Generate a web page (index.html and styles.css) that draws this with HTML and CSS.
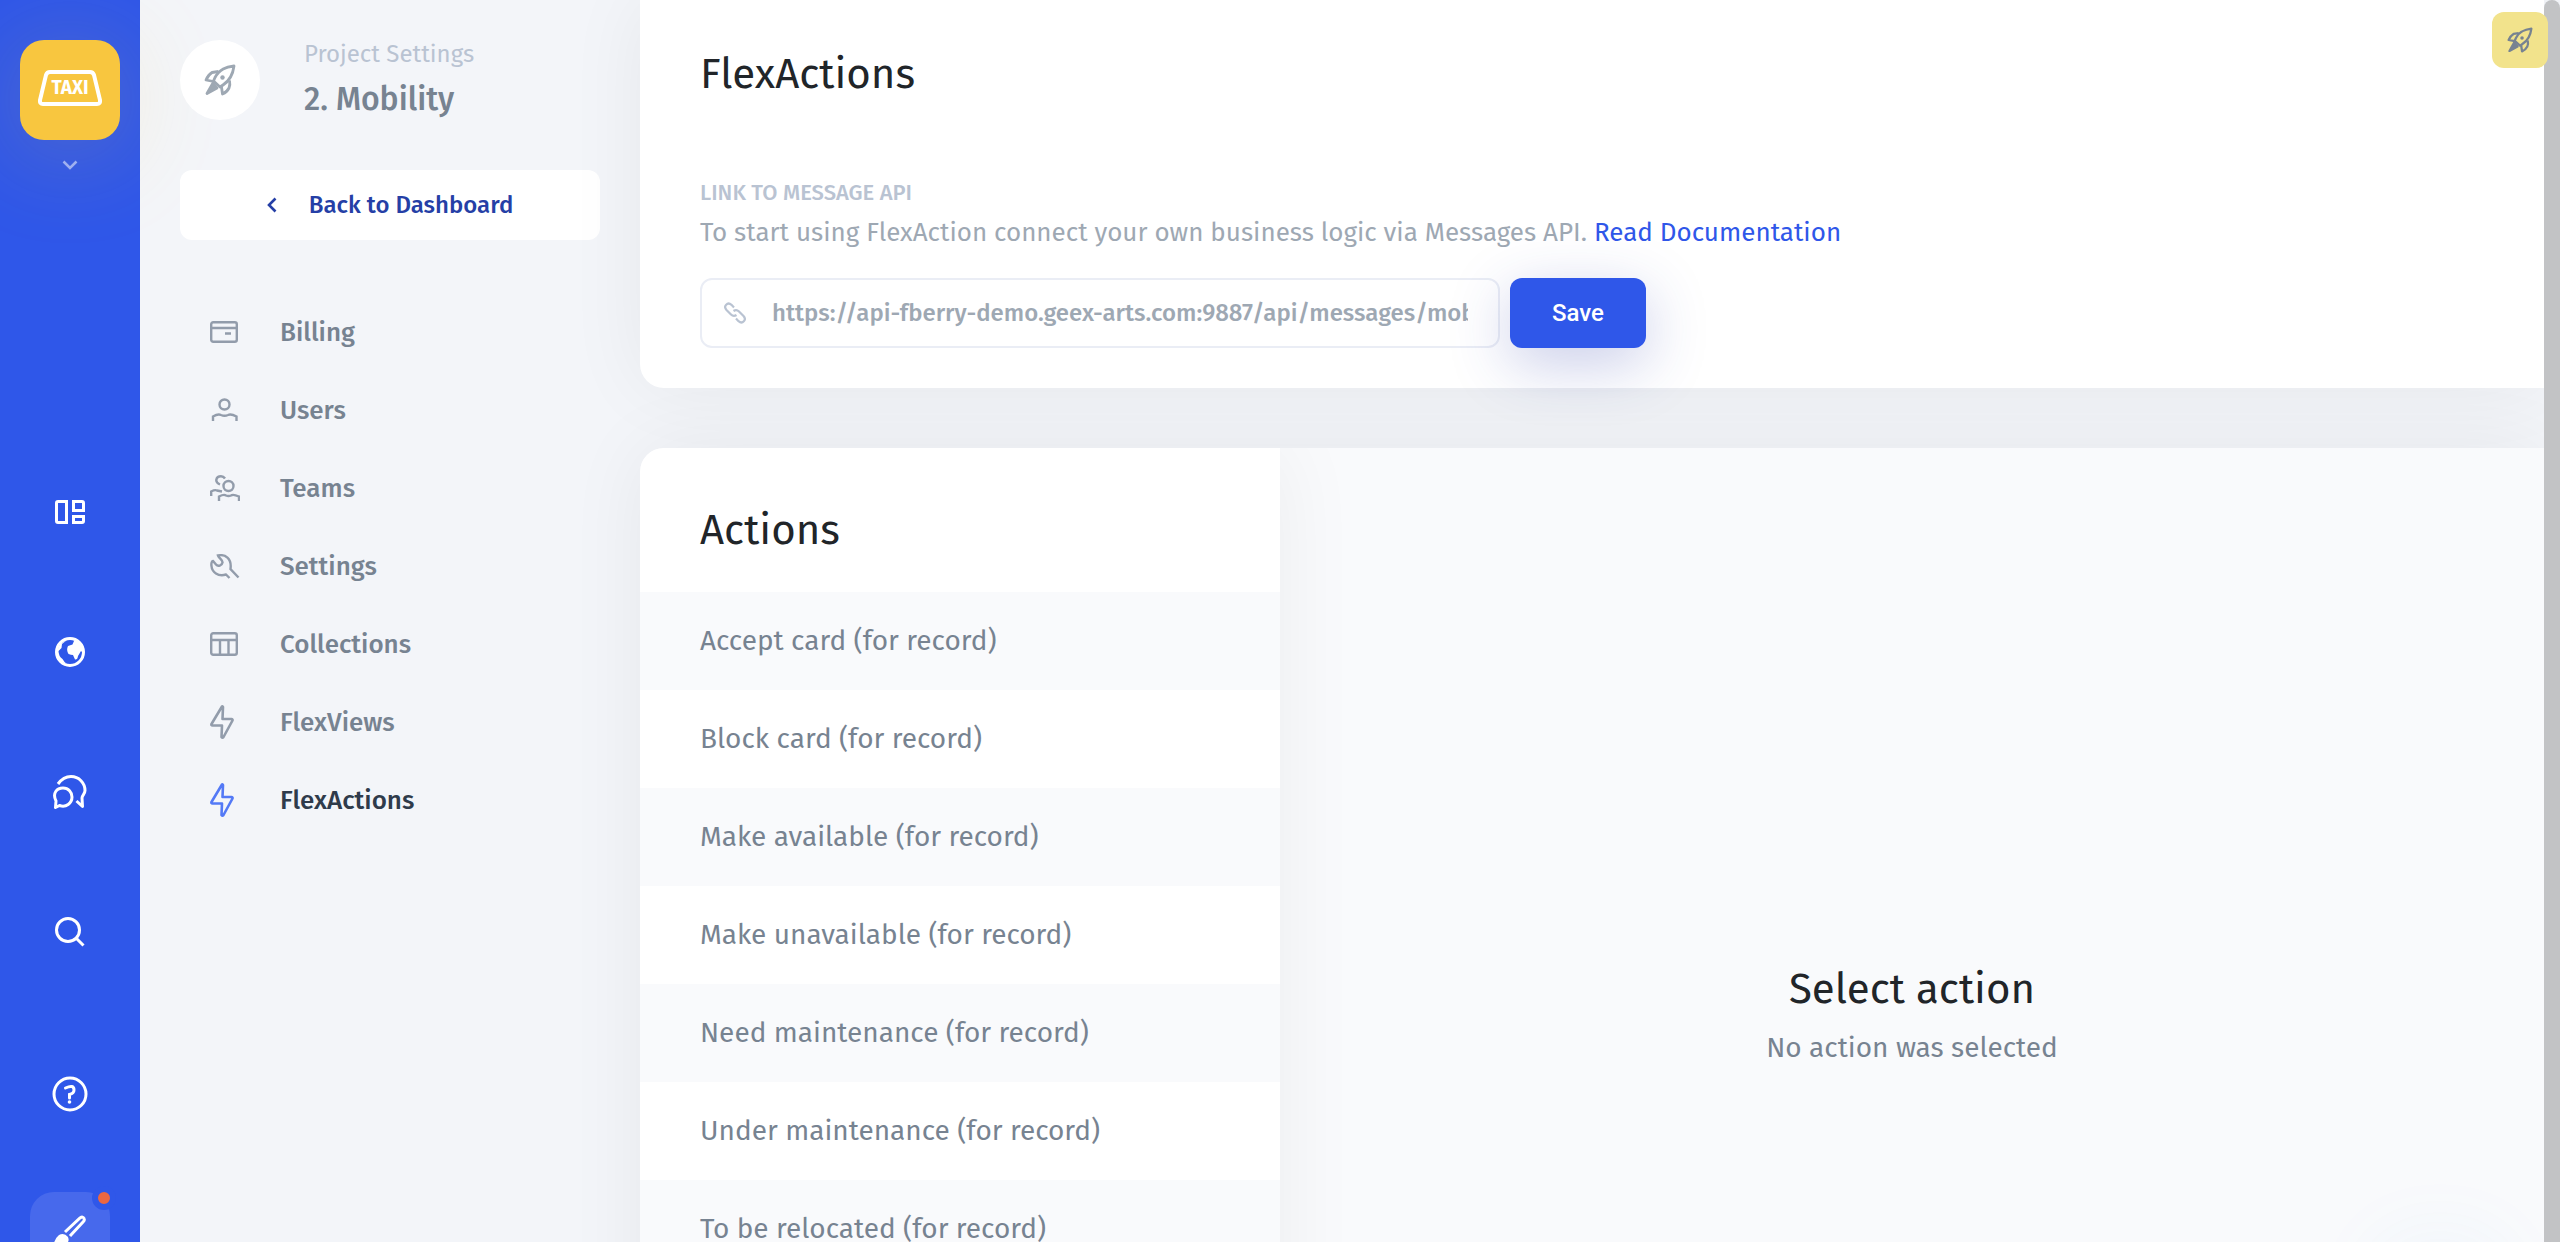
FILE: index.html
```html
<!DOCTYPE html>
<html lang="en">
<head>
<meta charset="utf-8">
<meta name="viewport" content="width=device-width, initial-scale=1">
<title>FlexActions – 2. Mobility</title>
<link rel="stylesheet" href="styles.css">
</head>
<body>
<svg class="sprite" aria-hidden="true">
  <symbol id="rocket" viewBox="0 0 32 32" fill="none" stroke="currentColor" stroke-width="2.8" stroke-linejoin="round">
    <path d="M30 2C22 3 15.500 5 11 13.500L9.500 17 16 23 19 21C26 16.500 29 10 30 2Z"/>
    <path d="M14.500 7.500 8 8.500C5.500 10 3.500 12.500 2 16L9.500 17.500"/>
    <path d="M25.500 16.500C26 19 26 22 25 24 23.500 27 21 29 18.500 30L17.500 23"/>
    <path d="M9 19 3 29.500 13 24Z" fill="currentColor"/>
    <circle cx="18.500" cy="13.500" r="2.200" fill="currentColor" stroke="none"/>
  </symbol>
  <symbol id="bolt" viewBox="0 0 24 34" fill="none" stroke="currentColor" stroke-width="2.600" stroke-linejoin="round">
    <path d="M12 1.500 1.500 19Q1 20.500 2.500 20.500H12L11.500 32Q12.500 33 13.500 32L22.500 15.500Q22.800 14 21.500 14H12.500L13 2Q12.500 1 12 1.500Z"/>
  </symbol>
</svg>
<div class="app">
  <nav class="rail" aria-label="Workspace">
    <button class="logo" type="button" aria-label="Switch project">
      <svg viewBox="0 0 64 36" width="64" height="36"><path d="M12 2H52Q55 2 56 5L62 30Q62.500 34 59 34H5Q1.500 34 2 30L8 5Q9 2 12 2Z" fill="none" stroke="#fff" stroke-width="4"/><text class="logo-text" x="32" y="24" text-anchor="middle">TAXI</text></svg>
    </button>
    <svg class="chevron" viewBox="0 0 16 10" width="16" height="10"><path d="M1.500 1.500 8 8 14.500 1.500" fill="none" stroke="currentColor" stroke-width="2.500"/></svg>
    <div class="rail-links">
      <a href="#" aria-label="Dashboard"><svg viewBox="0 0 30 24" width="30" height="24" fill="none" stroke="currentColor" stroke-width="3"><path d="M3 1.500H11.500V22.500H3Q1.500 22.500 1.500 21V3Q1.500 1.500 3 1.500ZM18.500 1.500H27Q28.500 1.500 28.500 3V10.500H18.500ZM18.500 16.500H28.500V21Q28.500 22.500 27 22.500H18.500Z"/></svg></a>
      <a href="#" aria-label="World"><svg viewBox="0 0 30 30" width="30" height="30"><circle cx="15" cy="15" r="13.500" fill="none" stroke="currentColor" stroke-width="3"/><path fill="currentColor" d="M19 4 17.500 7.500 13 9Q11 13 13.500 17 16 18 18 18L20 22.500Q22.500 23 23 19L26 14 28 16V11L23 4ZM12 3 5 7 2 14Q2 22 7 25L12 27Q9 25 7.500 22 3.500 19 3.500 14L6.500 11 7 7Z"/></svg></a>
      <a href="#" aria-label="Chats"><svg viewBox="0 0 34 34" width="34" height="34" fill="none" stroke="currentColor" stroke-width="3" stroke-linejoin="round"><path d="M5 9C9 3.500 14 1.500 18 1.500 26 1.500 32 8 32 15.500 32 19 29 20.500 29 23L29.500 31.500 23.500 26M2.500 32.500 3 26C-1 18 4 13 10 13 15.500 13 19 17.500 19 22 19 28 13 33 6.500 30.500Z"/></svg></a>
      <a href="#" aria-label="Search"><svg viewBox="0 0 30 30" width="30" height="30" fill="none" stroke="currentColor" stroke-width="3"><circle cx="13" cy="13" r="11.500"/><path d="M21 21 28.500 28.500"/></svg></a>
    </div>
    <a class="help" href="#" aria-label="Help"><svg viewBox="0 0 36 36" width="36" height="36" fill="none" stroke="currentColor" stroke-width="3"><circle cx="18" cy="18" r="16"/><path d="M13.500 12Q22 8 22 14 22 17.500 17.500 18.500V22" stroke-linecap="round"/><circle cx="17.500" cy="26" r="1.800" fill="currentColor" stroke="none"/></svg></a>
    <button class="brush" type="button" aria-label="Customize">
      <svg viewBox="0 0 34 34" width="34" height="34"><path d="M12 17 27 3Q30 1 31 3.500 32 5 30 7L17 21" fill="none" stroke="currentColor" stroke-width="3"/><path d="M1 32Q0 25 6 20 11 17 15 22 17 27 12 30 7 33 1 32Z" fill="currentColor"/></svg>
      <span class="dot"></span>
    </button>
  </nav>

  <aside class="sidebar">
    <header class="project">
      <span class="avatar"><svg width="32" height="32"><use href="#rocket"/></svg></span>
      <div>
        <p class="project-kind">Project Settings</p>
        <p class="project-name">2. Mobility</p>
      </div>
    </header>
    <a class="back" href="#"><svg viewBox="0 0 10 16" width="10" height="16"><path d="M8.500 1.500 2 8 8.500 14.500" fill="none" stroke="currentColor" stroke-width="2.600"/></svg>Back to Dashboard</a>
    <ul class="menu">
      <li><a href="#"><svg viewBox="0 0 28 22" width="28" height="22"><rect x="1.200" y="1.200" width="25.600" height="19.600" rx="2"/><path d="M1 7H27M15 12.500H21"/></svg>Billing</a></li>
      <li><a href="#"><svg viewBox="-1 0 28 24" width="28" height="24"><circle cx="13.500" cy="6.500" r="5"/><path d="M2 23V18.500Q7 15.500 10 17 13.500 18.500 17 17 20 15.500 25.500 18.500V23"/></svg>Users</a></li>
      <li><a href="#"><svg viewBox="0 0 30 27" width="30" height="27"><circle cx="18.500" cy="11" r="5"/><path d="M9 26V21.500Q14 19 16 20.500 18.500 21.500 21 20.500 23 19 29 21.500V26M10 9.500C4 7 6 1.200 11 1.200Q13.500 1.200 15 3.500M1.200 21V16.500Q5 14.500 7 15.500L12 16.500"/></svg>Teams</a></li>
      <li><a href="#"><svg viewBox="0 0 30 25" width="30" height="25"><path d="M19.500 24 16 20.500C8 23 2 18 1.500 12 1 9 2 7 3 7L6 10.500C8 13 12 11.500 12.500 8.500 13 6 9 4.500 8 1.500 15 0 22 4 20.500 15L28.500 23.500"/></svg>Settings</a></li>
      <li><a href="#"><svg viewBox="0 0 28 24" width="28" height="24"><rect x="1.200" y="1.200" width="25.600" height="21.600" rx="2"/><path d="M1 8H27M10 8V23M18.500 8V23"/></svg>Collections</a></li>
      <li><a href="#"><svg width="24" height="34"><use href="#bolt"/></svg>FlexViews</a></li>
      <li><a class="current" href="#" aria-current="page"><svg width="24" height="34"><use href="#bolt"/></svg>FlexActions</a></li>
    </ul>
  </aside>

  <main class="main">
    <section class="card intro">
      <h1>FlexActions</h1>
      <label class="label" for="api-url">LINK TO MESSAGE API</label>
      <p class="hint">To start using FlexAction connect your own business logic via Messages API. <a href="#">Read Documentation</a></p>
      <form class="api-form">
        <div class="field">
          <svg viewBox="0 0 22 22" width="22" height="22" fill="none" stroke="currentColor" stroke-width="2.200"><path d="M10 5.500 7.500 2.800C3.500-.5-1 4 2.500 8L7 12.500Q9.500 15 12.500 13M12 16.500 14.500 19.200C18.500 22.500 23 18 19.500 14L15 9.500Q12.500 7 9.500 9"/></svg>
          <input id="api-url" type="text" value="https://api-fberry-demo.geex-arts.com:9887/api/messages/mobility">
        </div>
        <button class="save" type="button">Save</button>
      </form>
    </section>

    <section class="card actions">
      <div class="action-list">
        <h2>Actions</h2>
        <ul>
          <li><a href="#">Accept card (for record)</a></li>
          <li><a href="#">Block card (for record)</a></li>
          <li><a href="#">Make available (for record)</a></li>
          <li><a href="#">Make unavailable (for record)</a></li>
          <li><a href="#">Need maintenance (for record)</a></li>
          <li><a href="#">Under maintenance (for record)</a></li>
          <li><a href="#">To be relocated (for record)</a></li>
        </ul>
      </div>
      <div class="empty">
        <h2>Select action</h2>
        <p>No action was selected</p>
      </div>
    </section>
  </main>

  <div class="scrollbar"><div class="thumb"></div></div>
  <button class="launch" type="button" aria-label="Launch"><svg width="26" height="26"><use href="#rocket"/></svg></button>
</div>
</body>
</html>
```
FILE: styles.css
```css
* { box-sizing: border-box; }

body, h1, h2, p, ul { margin: 0; padding: 0; }

body {
  background: #f3f5f9;
  color: #212529;
  font-family: "Fira Sans", "Noto Sans", sans-serif;
  overflow: hidden;
}

ul { list-style: none; }
a { color: inherit; text-decoration: none; }
button, input { font: inherit; border: 0; padding: 0; }
svg { display: block; flex: none; }
.sprite { position: absolute; width: 0; height: 0; }

.app {
  position: relative;
  display: grid;
  grid-template-columns: 140px 500px 1fr 16px;
  height: 100vh;
  overflow: hidden;
}

.app::after {
  content: "";
  position: absolute;
  right: 80px;
  bottom: -100px;
  width: 80px;
  height: 80px;
  border-radius: 50%;
  box-shadow: 0 0 100px rgba(60, 160, 230, .16);
}

/* Left rail */
.rail {
  display: flex;
  flex-direction: column;
  align-items: center;
  padding-top: 40px;
  background: #2f57e9;
  color: #fff;
}

.logo {
  flex: none;
  display: grid;
  place-items: center;
  width: 100px;
  height: 100px;
  padding-bottom: 4px;
  border-radius: 24px;
  background: #f8c63f;
  box-shadow: 0 10px 100px rgba(248, 198, 63, .22);
}

.logo-text { font-size: 19px; font-weight: 700; fill: #fff; }
.chevron { margin-top: 20px; color: #9fb0f0; }

.rail-links {
  display: flex;
  flex-direction: column;
  margin-top: 272px;
}

.rail-links a {
  display: grid;
  place-items: center;
  height: 140px;
}

.help { margin-top: 74px; }

.brush {
  position: relative;
  flex: none;
  display: grid;
  place-items: center;
  width: 80px;
  height: 80px;
  margin-top: 80px;
  border-radius: 24px;
  background: #4769ec;
  color: #fff;
}

.dot {
  position: absolute;
  top: -6px;
  right: -6px;
  width: 24px;
  height: 24px;
  border: 6px solid #2f57e9;
  border-radius: 50%;
  background: #eb6742;
}

/* Project settings */
.sidebar { padding: 40px; color: #778391; }

.project {
  display: flex;
  gap: 44px;
  height: 80px;
}

.avatar {
  display: grid;
  place-items: center;
  width: 80px;
  height: 80px;
  border-radius: 50%;
  background: #fff;
  color: #9ea8b3;
}

.project-kind { font-size: 24px; line-height: 28px; color: #b9c3d2; }
.project-name { margin-top: 12px; font-size: 32px; line-height: 38px; font-weight: 500; }

.back {
  display: flex;
  align-items: center;
  justify-content: center;
  gap: 32px;
  height: 70px;
  margin-top: 50px;
  border-radius: 12px;
  background: #fff;
  color: #253fa6;
  font-size: 24px;
  font-weight: 500;
}

.menu { margin-top: 53px; }

.menu a {
  display: grid;
  grid-template-columns: 70px 1fr;
  align-items: center;
  height: 78px;
  padding-left: 30px;
  font-size: 26px;
  font-weight: 500;
}

.menu svg { color: #929cab; fill: none; stroke: currentColor; stroke-width: 2.4; }
.menu .current { color: #2f3b4b; }
.menu .current svg { color: #5379f6; }

/* Content */
.main { position: relative; }

.card {
  background: #fff;
  box-shadow: 0 0 80px rgba(0, 0, 0, .06);
}

.intro {
  padding: 44px 60px 40px;
  border-radius: 0 0 0 24px;
}

h1, h2 { font-size: 42px; line-height: 60px; font-weight: 400; }

.label {
  display: block;
  margin-top: 74px;
  color: #b9c3d2;
  font-size: 22px;
  line-height: 30px;
  font-weight: 500;
}

.hint {
  margin-top: 6px;
  color: #9ea8b3;
  font-size: 26px;
  line-height: 38px;
}

.hint a { color: #2f57e9; }
.api-form { display: flex; gap: 10px; margin-top: 26px; }

.field {
  display: flex;
  align-items: center;
  gap: 26px;
  width: 800px;
  height: 70px;
  padding: 0 30px 0 22px;
  border: 2px solid #eaedf5;
  border-radius: 12px;
  color: #b9c3d2;
}

.field input {
  flex: 1;
  min-width: 0;
  background: none;
  color: #9ea8b3;
  font-size: 24px;
  font-weight: 500;
}

.save {
  width: 136px;
  height: 70px;
  border-radius: 12px;
  background: #2f57e9;
  box-shadow: 0 16px 60px rgba(45, 60, 170, .26);
  color: #fff;
  font-family: Roboto, sans-serif;
  font-size: 24px;
  font-weight: 500;
}

.actions {
  display: flex;
  margin-top: 60px;
  min-height: 1130px;
  border-radius: 24px 0 0 0;
  background: #f9fafc;
  overflow: hidden;
}

.action-list {
  flex: none;
  width: 640px;
  background: #fff;
  box-shadow: 0 0 80px rgba(0, 0, 0, .06);
}

.action-list h2 { padding: 52px 60px 32px; }

.action-list a {
  display: block;
  padding: 0 60px;
  color: #778391;
  font-size: 28px;
  line-height: 98px;
}

.action-list li:nth-child(odd) { background: #f9fafc; }

.empty {
  flex: 1;
  display: flex;
  flex-direction: column;
  align-items: center;
  justify-content: center;
  gap: 10px;
}

.empty p { color: #778391; font-size: 28px; line-height: 38px; }

/* Window edge */
.scrollbar { position: relative; }
.thumb { height: 98%; border-radius: 8px; background: #c2c3c5; }

.launch {
  position: absolute;
  top: 12px;
  right: 12px;
  display: grid;
  place-items: center;
  width: 56px;
  height: 56px;
  border-radius: 12px;
  background: #f2e38c;
  color: #778391;
}
```
